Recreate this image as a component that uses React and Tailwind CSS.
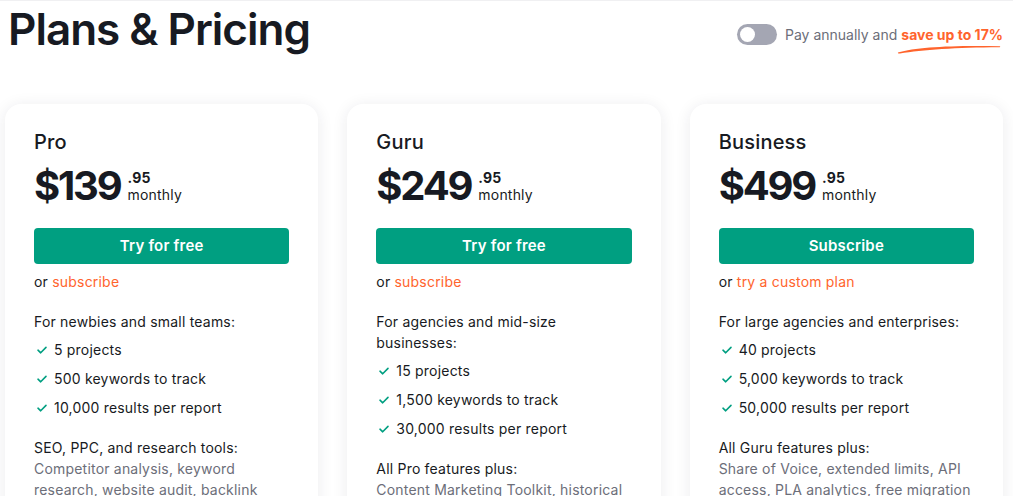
import React from 'react';

const plans = [
  {
    name: 'Pro',
    price: '$139',
    cents: '.95',
    cta: 'Try for free',
    alt: 'subscribe',
    audience: 'For newbies and small teams:',
    limits: ['5 projects', '500 keywords to track', '10,000 results per report'],
    featuresTitle: 'SEO, PPC, and research tools:',
    features: 'Competitor analysis, keyword research, website audit, backlink analysis, and more',
  },
  {
    name: 'Guru',
    price: '$249',
    cents: '.95',
    cta: 'Try for free',
    alt: 'subscribe',
    audience: 'For agencies and mid-size businesses:',
    limits: ['15 projects', '1,500 keywords to track', '30,000 results per report'],
    featuresTitle: 'All Pro features plus:',
    features: 'Content Marketing Toolkit, historical data, multi-targeting, and more',
  },
  {
    name: 'Business',
    price: '$499',
    cents: '.95',
    cta: 'Subscribe',
    alt: 'try a custom plan',
    audience: 'For large agencies and enterprises:',
    limits: ['40 projects', '5,000 keywords to track', '50,000 results per report'],
    featuresTitle: 'All Guru features plus:',
    features: 'Share of Voice, extended limits, API access, PLA analytics, free migration from third-party tools',
  },
];

function Check() {
  return (
    <svg width="12" height="12" viewBox="0 0 12 12" className="shrink-0">
      <path d="M2 6.2 L4.7 8.8 L10 3.4" fill="none" stroke="#009f81" strokeWidth="1.6" strokeLinecap="round" strokeLinejoin="round" />
    </svg>
  );
}

function PlanCard({ plan }) {
  return (
    <div className="bg-white rounded-2xl shadow-[0_2px_16px_rgba(30,35,60,0.09)] px-[29px] pt-6 pb-8 tracking-[0.2px]">
      <h2 className="text-[20px] leading-7 font-medium text-[#171a22]">{plan.name}</h2>
      <div className="flex items-start mt-[6px]">
        <span className="text-[40px] leading-[48px] font-bold text-[#171a22] tracking-[-2.2px]">{plan.price}</span>
        <div className="flex flex-col ml-[7px] pt-[7px] text-[14px] leading-[17px] text-[#171a22]">
          <span className="font-bold">{plan.cents}</span>
          <span>monthly</span>
        </div>
      </div>
      <button className="mt-[18px] w-full h-9 rounded bg-[#009f81] text-white text-[15px] font-semibold">
        {plan.cta}
      </button>
      <p className="mt-2 text-[14px] leading-5 text-[#171a22]">
        or <span className="text-[#ff642d]">{plan.alt}</span>
      </p>
      <p className="mt-[19px] text-[14px] leading-[21px] text-[#171a22]">{plan.audience}</p>
      <ul className="mt-[7px] flex flex-col gap-2">
        {plan.limits.map((item) => (
          <li key={item} className="flex items-center gap-[6px] pl-[2px] text-[14px] leading-[21px] text-[#171a22]">
            <Check />
            {item}
          </li>
        ))}
      </ul>
      <p className="mt-[19px] text-[14px] leading-[21px] text-[#171a22]">{plan.featuresTitle}</p>
      <p className="text-[14px] leading-[21px] text-[#6c6e79]">{plan.features}</p>
    </div>
  );
}

export default function App() {
  return (
    <div className="min-h-screen bg-white border-t border-[#f0f0f2] font-['Inter',sans-serif] overflow-hidden">
      <div className="flex items-start justify-between pl-[8px] pr-[10px]">
        <h1 className="text-[44px] leading-[56px] font-semibold text-[#171a22] tracking-[-1px]">
          Plans &amp; Pricing
        </h1>
        <div className="flex items-center mt-[23px]">
          <div className="w-10 h-[21px] rounded-full bg-[#a4a6b3] p-[3px] flex items-center">
            <div className="w-[15px] h-[15px] rounded-full bg-white" />
          </div>
          <span className="ml-2 text-[14px] leading-5 text-[#6c6e79]">Pay annually and</span>
          <span className="relative ml-[4px] text-[14px] leading-5 font-bold text-[#ff642d]">
            save up to 17%
            <svg className="absolute left-[-4px] top-[17px]" width="104" height="12" viewBox="0 0 104 12">
              <path d="M1 10.5 C 20 5, 55 3.2, 103 4.2 C 103.5 4.6, 103 5.2, 102 5.2 C 60 5.5, 25 7.5, 3 11.5 C 1.5 11.8, 0.5 11.2, 1 10.5 Z" fill="#ff642d" />
            </svg>
          </span>
        </div>
      </div>
      <div className="grid grid-cols-3 gap-[29px] pl-[5px] pr-[10px] mt-[47px] pb-10">
        {plans.map((plan) => (
          <PlanCard key={plan.name} plan={plan} />
        ))}
      </div>
    </div>
  );
}
